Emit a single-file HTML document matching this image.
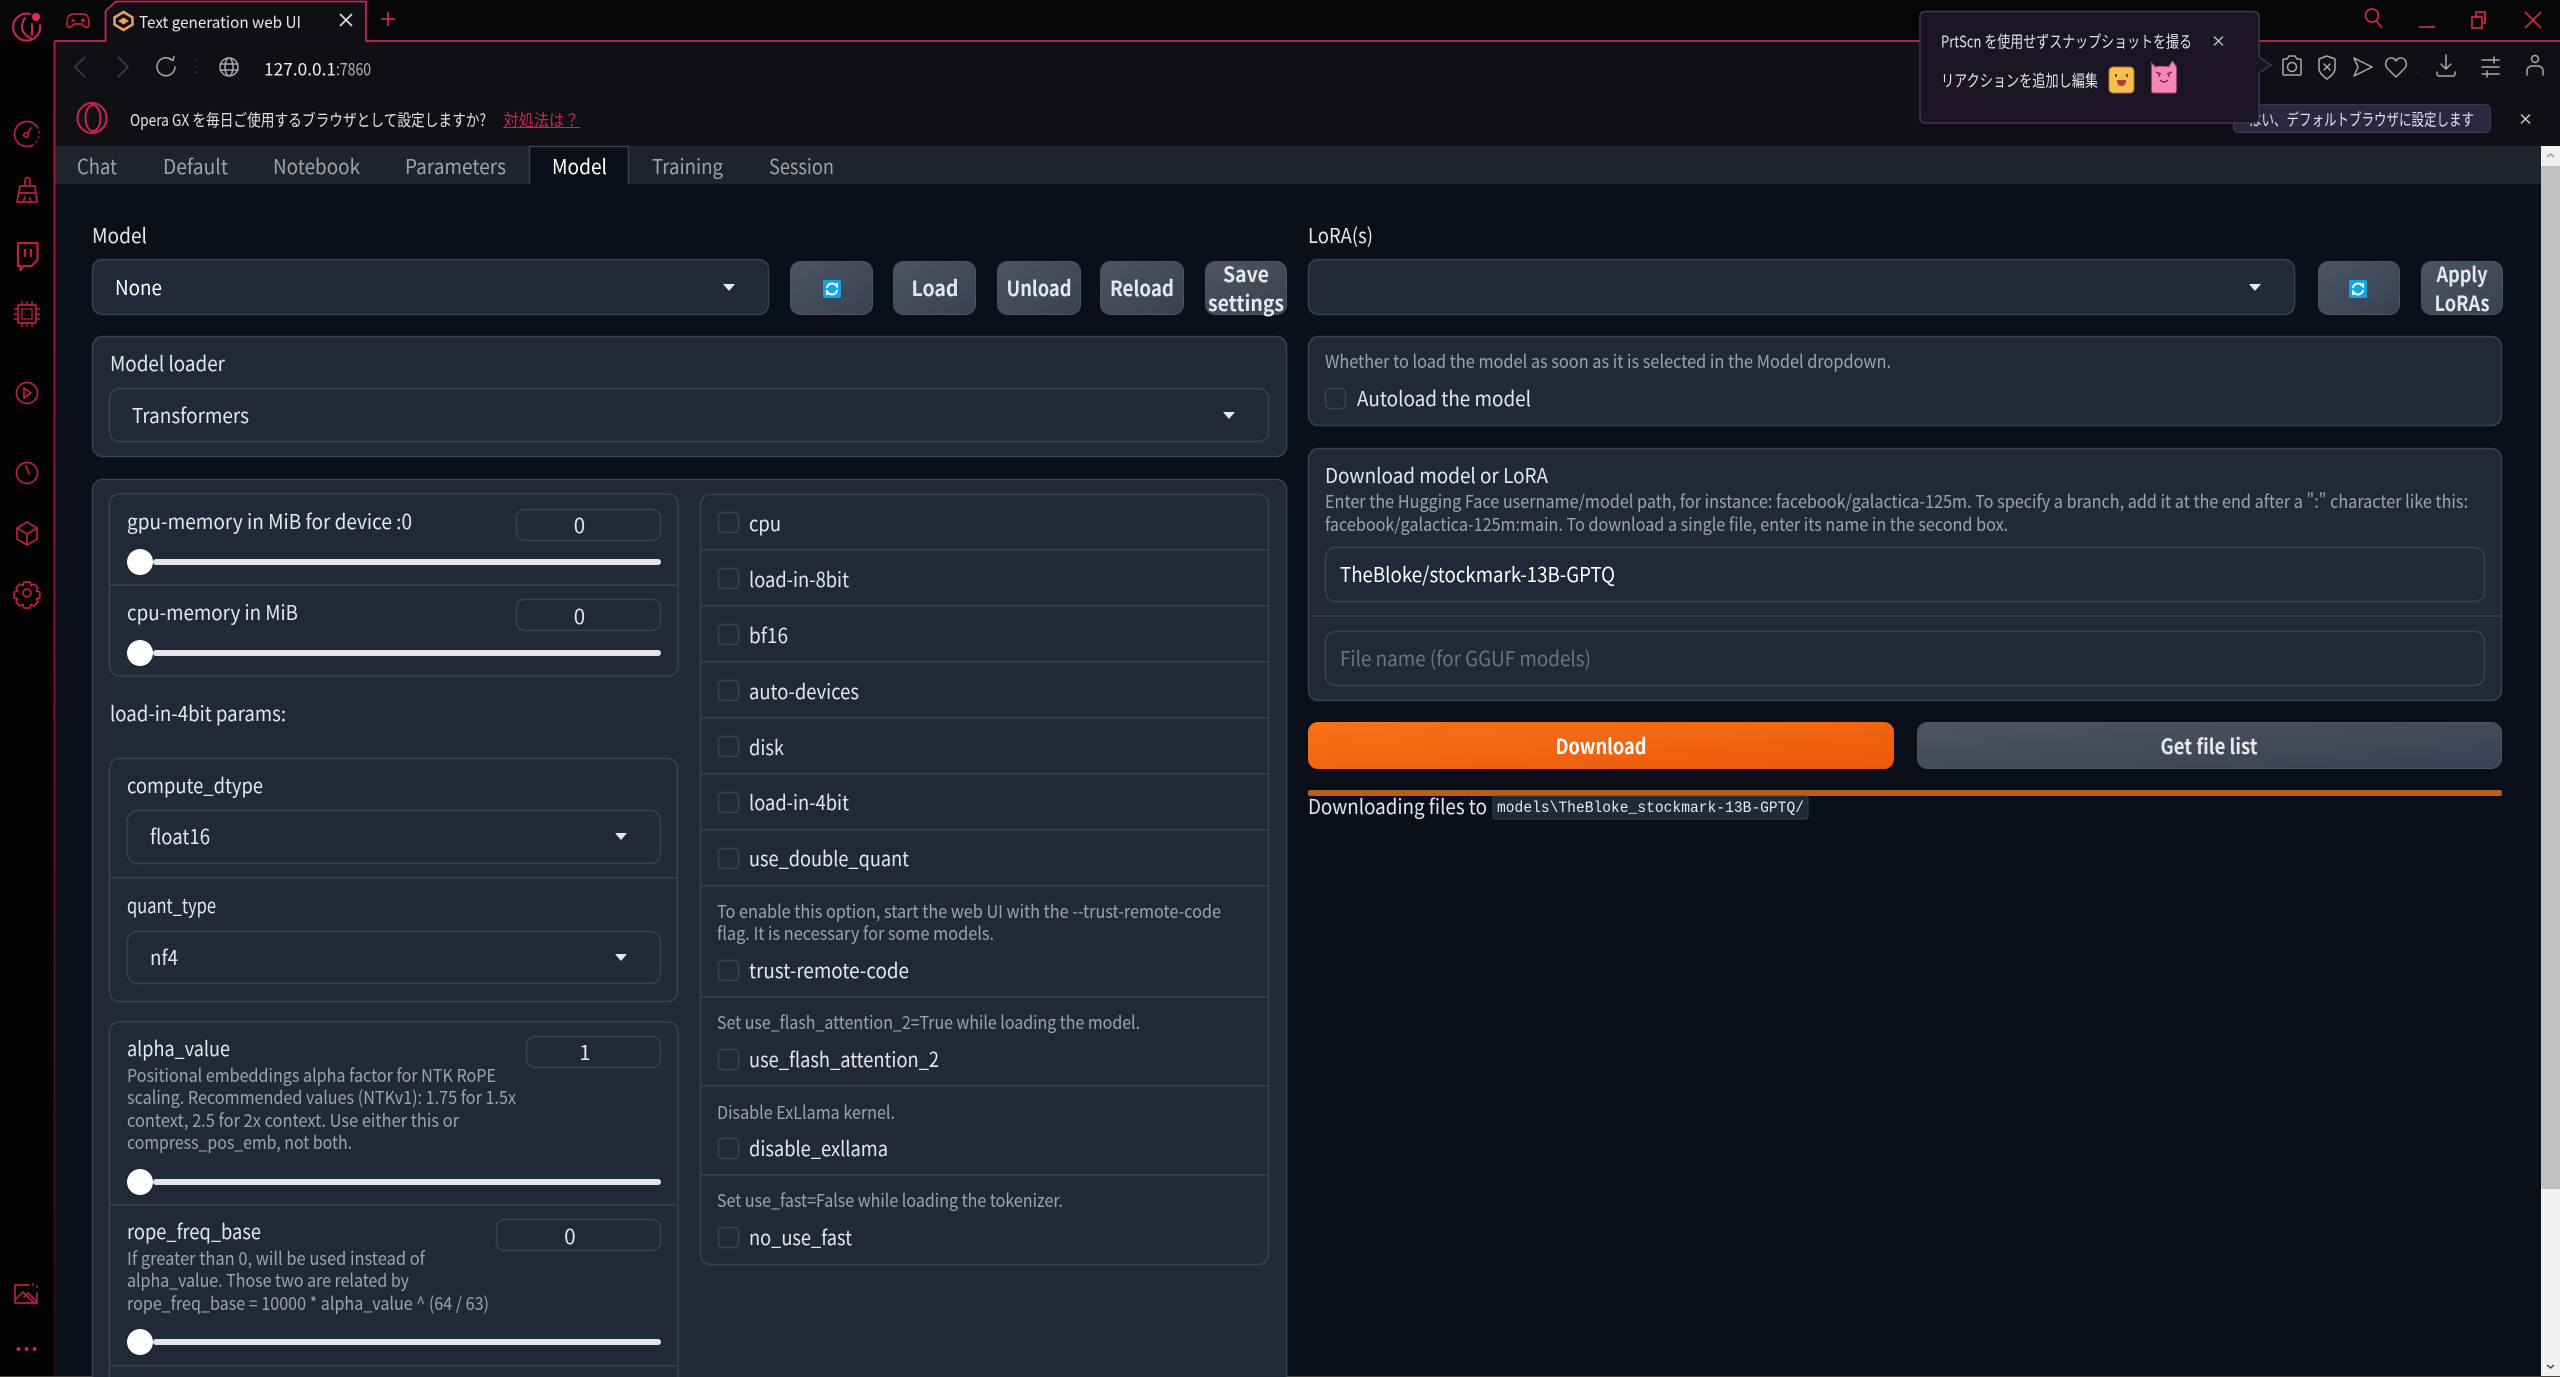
<!DOCTYPE html>
<html lang="ja"><head><meta charset="utf-8"><title>Text generation web UI</title>
<style>
html,body{margin:0;padding:0;width:2560px;height:1377px;overflow:hidden;background:#0b0f19}
svg{display:block}
text{font-family:"Noto Sans CJK JP","Liberation Sans",sans-serif;font-size:20.5px;fill:#e5e7eb;dominant-baseline:central;transform:translateY(-1px)}
.i{font-size:18px;fill:#9ca3af}
.b{font-weight:700;fill:#e5e7eb;font-size:21px}
.w{fill:#fff}
.t{fill:#9ca3af}
.s{font-size:16.500px;fill:#e4e2e8;transform:translateY(0)}
.p{fill:#1f2937;stroke:#374151;stroke-width:1.5}
.f{fill:#1f2937;stroke:#374151;stroke-width:1.5}
.l{stroke:#374151;stroke-width:1.5}
.btn{fill:url(#g);stroke:#4b5563;stroke-width:1}
.r{fill:none;stroke:#b8213f;stroke-width:1.7;stroke-linecap:round;stroke-linejoin:round}
.g{fill:none;stroke:#a9a8af;stroke-width:1.5;stroke-linecap:round;stroke-linejoin:round}
.c{fill:#1f2937;stroke:#374151;stroke-width:1.5}
</style></head><body>
<svg xmlns="http://www.w3.org/2000/svg" width="2560" height="1377" viewBox="0 0 2560 1377">
<defs>
<linearGradient id="g" x1="0" y1="0" x2="1" y2="1"><stop offset="0" stop-color="#4b5563"/><stop offset="1" stop-color="#374151"/></linearGradient>
<linearGradient id="o" x1="0" y1="0" x2="1" y2="1"><stop offset="0" stop-color="#f97316"/><stop offset="1" stop-color="#ea580c"/></linearGradient>
<linearGradient id="vl" gradientUnits="userSpaceOnUse" x1="0" y1="41" x2="0" y2="1377"><stop offset="0" stop-color="#b5203f"/><stop offset=".4" stop-color="#8a1c34"/><stop offset="1" stop-color="#2a0a14"/></linearGradient>
<g id="rf"><rect x="-9" y="-9" width="18" height="18" rx="1.5" fill="#0ea5e9"/><path d="M-5 -1a5 5 0 0 1 8.500-3l1.500 1.500v-3.500M5 1a5 5 0 0 1-8.500 3l-1.500-1.500v3.500" fill="none" stroke="#fff" stroke-width="1.900"/></g>
<path id="ar" d="M-6 -3h12l-6 7z" fill="#e5e7eb"/>
<rect id="th" x="-13" y="-13" width="26" height="26" rx="13" fill="#fff"/>
</defs>

<!-- chrome background -->
<rect width="2560" height="1377" fill="#020204"/>
<rect x="0" y="0" width="2560" height="41" fill="#060609"/>
<rect x="0" y="41" width="54" height="1336" fill="#030305"/>
<rect x="55" y="41" width="2505" height="105" fill="#100f16"/>
<path d="M105.500 41V11L116 1H366V41z" fill="#100f16"/>
<path d="M54.500 41H105.500V11L116 1.500H366V41H2560" fill="none" stroke="#c8264a" stroke-width="1.800"/>
<line x1="54.500" y1="41" x2="54.500" y2="1377" stroke="url(#vl)" stroke-width="1.800"/>

<!-- page -->
<rect x="55.500" y="146" width="2486" height="1231" fill="#0b0f19"/>
<rect x="55.500" y="146" width="2486" height="38" fill="#1f242c"/>
<path d="M529.500 184V146.500H628.500V184" fill="#0b0f19" stroke="#374151" stroke-width="1.500"/>
<text x="77" y="166" textLength="40" lengthAdjust="spacingAndGlyphs" class="t">Chat</text>
<text x="163" y="166" textLength="65" lengthAdjust="spacingAndGlyphs" class="t">Default</text>
<text x="273" y="166" textLength="87" lengthAdjust="spacingAndGlyphs" class="t">Notebook</text>
<text x="405" y="166" textLength="101" lengthAdjust="spacingAndGlyphs" class="t">Parameters</text>
<text x="552" y="166" textLength="55" lengthAdjust="spacingAndGlyphs" class="w">Model</text>
<text x="652" y="166" textLength="71" lengthAdjust="spacingAndGlyphs" class="t">Training</text>
<text x="769" y="166" textLength="65" lengthAdjust="spacingAndGlyphs" class="t">Session</text>

<!-- scrollbar -->
<rect x="2541" y="146" width="19" height="1231" fill="#f1f1f1"/>
<rect x="2541" y="166" width="19" height="1023" fill="#c1c1c1"/>
<path d="M2547 157l3.500-3 3.500 3" fill="none" stroke="#a0a0a0" stroke-width="1.500"/>
<path d="M2547 1365l3.500 3 3.500-3" fill="none" stroke="#505050" stroke-width="1.500"/>
<rect x="0" y="1376" width="2560" height="1" fill="#4a473c"/>

<!-- top row -->
<text x="92" y="235" textLength="55" lengthAdjust="spacingAndGlyphs">Model</text>
<rect class="p" x="92.500" y="259.500" width="676" height="55" rx="10"/>
<text x="115" y="287" textLength="47" lengthAdjust="spacingAndGlyphs" class="w">None</text>
<use href="#ar" x="729" y="287"/>
<rect class="btn" x="790.500" y="261.500" width="82" height="53" rx="10"/><use href="#rf" x="832" y="289"/>
<rect class="btn" x="893.500" y="261.500" width="82" height="53" rx="10"/><text class="b" x="935" y="289" text-anchor="middle" textLength="47" lengthAdjust="spacingAndGlyphs">Load</text>
<rect class="btn" x="997.500" y="261.500" width="83" height="53" rx="10"/><text class="b" x="1039" y="289" text-anchor="middle" textLength="65" lengthAdjust="spacingAndGlyphs">Unload</text>
<rect class="btn" x="1100.500" y="261.500" width="83" height="53" rx="10"/><text class="b" x="1142" y="289" text-anchor="middle" textLength="64" lengthAdjust="spacingAndGlyphs">Reload</text>
<rect class="btn" x="1205.500" y="261.500" width="81" height="53" rx="10"/><text class="b" x="1246" y="275" text-anchor="middle" textLength="46" lengthAdjust="spacingAndGlyphs">Save</text><text class="b" x="1246" y="304" text-anchor="middle" textLength="76" lengthAdjust="spacingAndGlyphs">settings</text>

<text x="1308" y="235" textLength="65" lengthAdjust="spacingAndGlyphs">LoRA(s)</text>
<rect class="p" x="1308.500" y="259.500" width="986" height="55" rx="10"/>
<use href="#ar" x="2255" y="287"/>
<rect class="btn" x="2318.500" y="261.500" width="81" height="53" rx="10"/><use href="#rf" x="2358" y="289"/>
<rect class="btn" x="2421.500" y="261.500" width="81" height="53" rx="10"/><text class="b" x="2462" y="275" text-anchor="middle" textLength="51" lengthAdjust="spacingAndGlyphs">Apply</text><text class="b" x="2462" y="304" text-anchor="middle" textLength="55" lengthAdjust="spacingAndGlyphs">LoRAs</text>

<!-- model loader -->
<rect class="p" x="92.500" y="336.500" width="1194" height="120" rx="10"/>
<text x="110" y="363" textLength="115" lengthAdjust="spacingAndGlyphs">Model loader</text>
<rect class="f" x="109.500" y="388.500" width="1159" height="53" rx="10"/>
<text x="132" y="415" textLength="117" lengthAdjust="spacingAndGlyphs">Transformers</text>
<use href="#ar" x="1229" y="415"/>

<!-- big panel -->
<rect class="p" x="92.500" y="479.500" width="1194" height="920" rx="10"/>

<!-- left col: sliders -->
<path class="p" d="M109.500 504a10 10 0 0 1 10-10H668a10 10 0 0 1 10 10V666a10 10 0 0 1-10 10H119.500a10 10 0 0 1-10-10z"/>
<line class="l" x1="110" y1="585" x2="678" y2="585"/>
<text x="127" y="521" textLength="285" lengthAdjust="spacingAndGlyphs">gpu-memory in MiB for device :0</text>
<rect class="f" x="516.500" y="509.500" width="144" height="31" rx="8"/>
<text x="579.500" y="525" text-anchor="middle">0</text>
<rect x="153" y="559" width="508" height="6" rx="3" fill="#e5e7eb"/><use href="#th" x="140" y="562"/>
<text x="127" y="612" textLength="171" lengthAdjust="spacingAndGlyphs">cpu-memory in MiB</text>
<rect class="f" x="516.500" y="599.500" width="144" height="31" rx="8"/>
<text x="579.500" y="616" text-anchor="middle">0</text>
<rect x="153" y="650" width="508" height="6" rx="3" fill="#e5e7eb"/><use href="#th" x="140" y="653"/>

<text x="110" y="713" textLength="176" lengthAdjust="spacingAndGlyphs">load-in-4bit params:</text>

<rect class="p" x="109.500" y="758.500" width="568" height="243" rx="10"/>
<line class="l" x1="110" y1="878" x2="678" y2="878"/>
<text x="127" y="785" textLength="136" lengthAdjust="spacingAndGlyphs">compute_dtype</text>
<rect class="f" x="127.500" y="810.500" width="533" height="53" rx="10"/>
<text x="150" y="836" textLength="60" lengthAdjust="spacingAndGlyphs">float16</text>
<use href="#ar" x="621" y="836"/>
<text x="127" y="905" textLength="89" lengthAdjust="spacingAndGlyphs">quant_type</text>
<rect class="f" x="127.500" y="931.500" width="533" height="52" rx="10"/>
<text x="150" y="957" textLength="28" lengthAdjust="spacingAndGlyphs">nf4</text>
<use href="#ar" x="621" y="957"/>

<path class="p" d="M109.500 1032a10 10 0 0 1 10-10H668a10 10 0 0 1 10 10V1400H109.500z"/>
<line class="l" x1="110" y1="1205" x2="678" y2="1205"/>
<line class="l" x1="110" y1="1366" x2="678" y2="1366"/>
<text x="127" y="1048" textLength="103" lengthAdjust="spacingAndGlyphs">alpha_value</text>
<rect class="f" x="526.500" y="1036.500" width="134" height="31" rx="8"/>
<text x="585" y="1052" text-anchor="middle">1</text>
<text class="i" x="127" y="1076" textLength="369" lengthAdjust="spacingAndGlyphs">Positional embeddings alpha factor for NTK RoPE</text>
<text class="i" x="127" y="1098" textLength="389" lengthAdjust="spacingAndGlyphs">scaling. Recommended values (NTKv1): 1.75 for 1.5x</text>
<text class="i" x="127" y="1121" textLength="332" lengthAdjust="spacingAndGlyphs">context, 2.5 for 2x context. Use either this or</text>
<text class="i" x="127" y="1143" textLength="225" lengthAdjust="spacingAndGlyphs">compress_pos_emb, not both.</text>
<rect x="153" y="1179" width="508" height="6" rx="3" fill="#e5e7eb"/><use href="#th" x="140" y="1182"/>
<text x="127" y="1231" textLength="134" lengthAdjust="spacingAndGlyphs">rope_freq_base</text>
<rect class="f" x="496.500" y="1219.500" width="164" height="31" rx="8"/>
<text x="570" y="1236" text-anchor="middle">0</text>
<text class="i" x="127" y="1259" textLength="298" lengthAdjust="spacingAndGlyphs">If greater than 0, will be used instead of</text>
<text class="i" x="127" y="1281" textLength="282" lengthAdjust="spacingAndGlyphs">alpha_value. Those two are related by</text>
<text class="i" x="127" y="1304" textLength="362" lengthAdjust="spacingAndGlyphs">rope_freq_base = 10000 * alpha_value ^ (64 / 63)</text>
<rect x="153" y="1339" width="508" height="6" rx="3" fill="#e5e7eb"/><use href="#th" x="140" y="1342"/>

<!-- checkbox col -->
<rect class="p" x="700.500" y="494.500" width="568" height="770" rx="10"/>
<g class="l">
<line x1="701" y1="550" x2="1269" y2="550"/><line x1="701" y1="606" x2="1269" y2="606"/><line x1="701" y1="662" x2="1269" y2="662"/><line x1="701" y1="718" x2="1269" y2="718"/><line x1="701" y1="774" x2="1269" y2="774"/><line x1="701" y1="830" x2="1269" y2="830"/><line x1="701" y1="886" x2="1269" y2="886"/><line x1="701" y1="997" x2="1269" y2="997"/><line x1="701" y1="1086" x2="1269" y2="1086"/><line x1="701" y1="1175" x2="1269" y2="1175"/>
</g>
<rect class="c" x="718.500" y="512.500" width="20" height="20" rx="4"/><text x="749" y="523" textLength="32" lengthAdjust="spacingAndGlyphs">cpu</text>
<rect class="c" x="718.500" y="568.500" width="20" height="20" rx="4"/><text x="749" y="579" textLength="100" lengthAdjust="spacingAndGlyphs">load-in-8bit</text>
<rect class="c" x="718.500" y="624.500" width="20" height="20" rx="4"/><text x="749" y="635" textLength="39" lengthAdjust="spacingAndGlyphs">bf16</text>
<rect class="c" x="718.500" y="680.500" width="20" height="20" rx="4"/><text x="749" y="691" textLength="110" lengthAdjust="spacingAndGlyphs">auto-devices</text>
<rect class="c" x="718.500" y="736.500" width="20" height="20" rx="4"/><text x="749" y="747" textLength="35" lengthAdjust="spacingAndGlyphs">disk</text>
<rect class="c" x="718.500" y="792.500" width="20" height="20" rx="4"/><text x="749" y="802" textLength="100" lengthAdjust="spacingAndGlyphs">load-in-4bit</text>
<rect class="c" x="718.500" y="848.500" width="20" height="20" rx="4"/><text x="749" y="858" textLength="160" lengthAdjust="spacingAndGlyphs">use_double_quant</text>
<text class="i" x="717" y="912" textLength="504" lengthAdjust="spacingAndGlyphs">To enable this option, start the web UI with the --trust-remote-code</text>
<text class="i" x="717" y="934" textLength="277" lengthAdjust="spacingAndGlyphs">flag. It is necessary for some models.</text>
<rect class="c" x="718.500" y="960.500" width="20" height="20" rx="4"/><text x="749" y="970" textLength="160" lengthAdjust="spacingAndGlyphs">trust-remote-code</text>
<text class="i" x="717" y="1023" textLength="423" lengthAdjust="spacingAndGlyphs">Set use_flash_attention_2=True while loading the model.</text>
<rect class="c" x="718.500" y="1049.500" width="20" height="20" rx="4"/><text x="749" y="1059" textLength="190" lengthAdjust="spacingAndGlyphs">use_flash_attention_2</text>
<text class="i" x="717" y="1113" textLength="178" lengthAdjust="spacingAndGlyphs">Disable ExLlama kernel.</text>
<rect class="c" x="718.500" y="1138.500" width="20" height="20" rx="4"/><text x="749" y="1148" textLength="139" lengthAdjust="spacingAndGlyphs">disable_exllama</text>
<text class="i" x="717" y="1201" textLength="346" lengthAdjust="spacingAndGlyphs">Set use_fast=False while loading the tokenizer.</text>
<rect class="c" x="718.500" y="1227.500" width="20" height="20" rx="4"/><text x="749" y="1237" textLength="103" lengthAdjust="spacingAndGlyphs">no_use_fast</text>

<!-- right panels -->
<rect class="p" x="1308.500" y="336.500" width="1193" height="89" rx="10"/>
<text class="i" x="1325" y="362" textLength="566" lengthAdjust="spacingAndGlyphs">Whether to load the model as soon as it is selected in the Model dropdown.</text>
<rect class="c" x="1325.500" y="388.500" width="20" height="20" rx="4"/>
<text x="1357" y="398" textLength="174" lengthAdjust="spacingAndGlyphs">Autoload the model</text>

<rect class="p" x="1308.500" y="448.500" width="1193" height="252" rx="10"/>
<text x="1325" y="475" textLength="223" lengthAdjust="spacingAndGlyphs">Download model or LoRA</text>
<text class="i" x="1325" y="502" textLength="1143" lengthAdjust="spacingAndGlyphs">Enter the Hugging Face username/model path, for instance: facebook/galactica-125m. To specify a branch, add it at the end after a &quot;:&quot; character like this:</text>
<text class="i" x="1325" y="525" textLength="683" lengthAdjust="spacingAndGlyphs">facebook/galactica-125m:main. To download a single file, enter its name in the second box.</text>
<rect class="f" x="1325.500" y="547.500" width="1159" height="54" rx="10"/>
<text x="1340" y="574" textLength="275" lengthAdjust="spacingAndGlyphs" class="w">TheBloke/stockmark-13B-GPTQ</text>
<line class="l" x1="1309" y1="616" x2="2501" y2="616"/>
<rect class="f" x="1325.500" y="631.500" width="1159" height="54" rx="10"/>
<text x="1340" y="658" textLength="251" lengthAdjust="spacingAndGlyphs" style="fill:#6b7280">File name (for GGUF models)</text>

<rect x="1308" y="722" width="586" height="47" rx="10" fill="url(#o)"/>
<text class="b" style="fill:#fff" x="1601" y="747" text-anchor="middle" textLength="91" lengthAdjust="spacingAndGlyphs">Download</text>
<rect class="btn" x="1917.500" y="722.500" width="584" height="46" rx="10"/>
<text class="b" x="2209" y="747" text-anchor="middle" textLength="97" lengthAdjust="spacingAndGlyphs">Get file list</text>

<rect x="1308" y="790" width="1194" height="6" rx="2" fill="#b45f1f"/>
<text x="1308" y="806" textLength="179" lengthAdjust="spacingAndGlyphs">Downloading files to</text>
<rect x="1493" y="796" width="315" height="23" rx="2" fill="#1f2937" stroke="#374151"/>
<text x="1497" y="809" textLength="307" lengthAdjust="spacingAndGlyphs" style="font-family:'Liberation Mono',monospace;font-size:15.500px">models\TheBloke_stockmark-13B-GPTQ/</text>

<!-- logo -->
<g fill="none" stroke="#c8264a" stroke-width="2.100" stroke-linecap="round">
<path d="M30 14a13.500 13.500 0 1 0 10 11"/><path d="M25 18a9 13 0 0 0-3 10c1 5 5 9 9 10M32 24v11"/>
</g>
<circle cx="36" cy="17" r="4" fill="#ef2a52"/>
<g class="r">
<!-- game -->
<path d="M74 14h8c6 0 7 4 7 10 0 4-3 4-5 2l-2-2h-8l-2 2c-2 2-5 2-5-2 0-6 1-10 7-10z"/><path d="M73 19v3M71.500 20.500h3" stroke-width="1.300"/><circle cx="83" cy="20.500" r="1.200"/>
<!-- speedo -->
<path d="M33 145A12.500 12.500 0 1 1 38 128"/><path d="M39 132v.5M38.500 137v.5M36.500 141.500v.5"/><circle cx="26" cy="135" r="2.300"/><path d="M28 133l3-5"/>
<!-- broom -->
<path d="M25 185v-5a2.500 2.500 0 0 1 5 0v5M20 186h15l2 16H17zM19 193h17M23 202l2-5M31 202l-1-4"/>
<!-- twitch -->
<path d="M18 243h19.500v17l-6 6h-8l-3 4v-4h-2.500z" stroke-width="2.200"/><path d="M25 250v6M31 250v6" stroke-width="2.400"/>
<!-- cpu -->
<rect x="18" y="305" width="18" height="18" rx="1"/><rect x="22" y="309" width="10" height="10" stroke-width="1.300"/><path d="M22 305v-3.500M27 305v-3.500M32 305v-3.500M22 323v3.500M27 323v3.500M32 323v3.500M18 309h-3.500M18 314h-3.500M18 319h-3.500M36 309h3.500M36 314h3.500M36 319h3.500" stroke-width="1.400"/>
<!-- play -->
<circle cx="27" cy="393" r="10.500"/><path d="M24 388l7 5-7 5z"/>
<!-- clock -->
<circle cx="27" cy="473" r="10.500"/><path d="M26 466l3 8"/>
<!-- cube -->
<path d="M27 522l10 6v11l-10 6-10-6v-11zM17 528l10 6 10-6M27 534v11"/>
<!-- gear -->
<circle cx="27" cy="593" r="4"/><path d="M24 582h6l1 3.500 3-1.500 4 4-1.700 3 3.500 1v6l-3.500 1 1.700 3-4 4-3-1.500-1 3.500h-6l-1-3.500-3 1.500-4-4 1.700-3-3.500-1v-6l3.500-1-1.700-3 4-4 3 1.500z"/>
<!-- gallery -->
<path d="M29 1285H15v18h22v-10M33 1284v1M37 1286v1M15 1300l8-8 11 11M24 1297l4-4 9 9"/>
</g>
<circle cx="18.500" cy="1349" r="1.900" fill="#d62550"/><circle cx="26.500" cy="1349" r="1.900" fill="#d62550"/><circle cx="34.500" cy="1349" r="1.900" fill="#d62550"/>

<!-- tab -->
<path d="M123.500 12l9 5.500v7l-9 5.500-9-5.500v-7z" fill="none" stroke="#e8a35a" stroke-width="2.500"/><path d="M118 21l5.500-3.500 5.500 3.500-5.500 3.500z" fill="#e8a35a"/>
<text x="139" y="22" textLength="162" lengthAdjust="spacingAndGlyphs" style="font-size:16px;fill:#e8e6ea">Text generation web UI</text>
<path d="M340 14l12 12M352 14l-12 12" fill="none" stroke="#d8d6dc" stroke-width="1.800"/>
<path d="M388 12v14M381 19h14" fill="none" stroke="#c8264a" stroke-width="1.800"/>

<!-- toolbar left -->
<path d="M85 57l-10 10 10 10" fill="none" stroke="#3b3a42" stroke-width="1.800"/>
<path d="M118 57l10 10-10 10" fill="none" stroke="#3b3a42" stroke-width="1.800"/>
<path class="g" d="M172 60a9 9 0 1 0 3 7M169.500 59l3.500 1.500 1-4"/>
<path d="M196 60v1M196 66v1M196 72v1" stroke="#3b3a42" stroke-width="2.200"/>
<g class="g"><circle cx="229" cy="67" r="9"/><ellipse cx="229" cy="67" rx="4" ry="9"/><path d="M220 64h18M220 70h18"/></g>
<text x="264" y="69" textLength="72" lengthAdjust="spacingAndGlyphs" style="font-size:17px;fill:#f0eff2">127.0.0.1</text>
<text x="336" y="69" textLength="35" lengthAdjust="spacingAndGlyphs" style="font-size:17px;fill:#b4b3ba">:7860</text>

<!-- info bar -->
<g fill="none" stroke="#c8264a" stroke-width="2"><ellipse cx="92" cy="118" rx="14.500" ry="15"/><ellipse cx="93" cy="118" rx="7.500" ry="13"/></g>
<text class="s" x="130" y="119" textLength="356" lengthAdjust="spacingAndGlyphs">Opera GX を毎日ご使用するブラウザとして設定しますか?</text>
<text class="s" x="503.500" y="119" textLength="76" lengthAdjust="spacingAndGlyphs" style="fill:#c8264a">対処法は？</text>
<line x1="503" y1="127.500" x2="580" y2="127.500" stroke="#c8264a" stroke-width="1"/>
<rect x="2233.500" y="104.500" width="257" height="28" rx="5" fill="#2d2640" stroke="#3f3856"/>
<text class="s" x="2249" y="118.500" textLength="225" lengthAdjust="spacingAndGlyphs">はい、デフォルトブラウザに設定します</text>
<path d="M2521 114.500l9 9M2530 114.500l-9 9" fill="none" stroke="#c9c8cf" stroke-width="1.500"/>

<!-- toolbar right icons -->
<g class="g">
<path d="M2284 59h3l2-3h6l2 3h3a1 1 0 0 1 1 1v14a1 1 0 0 1-1 1h-16a1 1 0 0 1-1-1V60a1 1 0 0 1 1-1z"/><circle cx="2292" cy="67" r="4.500"/>
<path d="M2327 56l8 3v9c0 5-4 8-8 11-4-3-8-6-8-11v-9z"/><path d="M2324 64l6 6M2330 64l-6 6"/>
<path d="M2354 58l18 9-18 9 4-9z"/>
<path d="M2396 77l-8-8c-5-5-1-12 4-11 2 0 3 1 4 3 1-2 2-3 4-3 5-1 9 6 4 11z"/>
<path d="M2446 55v14M2441 64l5 5 5-5M2437 72v2a2 2 0 0 0 2 2h14a2 2 0 0 0 2-2v-2"/>
<path d="M2482 60h17M2482 67h17M2482 74h17M2494 57v6M2487 71v6"/>
<circle cx="2535" cy="59" r="3.500"/><path d="M2527 75v-4a5 5 0 0 1 5-5h6a5 5 0 0 1 5 5v4"/>
</g>
<path d="M2418 60v1M2418 66v1M2418 72v1" stroke="#2e2d34" stroke-width="2.200"/>

<!-- window controls -->
<g fill="none" stroke="#c8264a" stroke-width="1.800"><circle cx="2372" cy="15.500" r="6.500"/><path d="M2376.500 21l5.500 7"/><path d="M2419 27h16"/><rect x="2472" y="17" width="10" height="11"/><path d="M2476 17v-5h9v11h-3"/><path d="M2525 12l16 16M2541 12l-16 16"/></g>

<!-- popup -->
<path d="M1925 11.500H2254a5 5 0 0 1 5 5V57l12 8-12 8v45a5 5 0 0 1-5 5H1925a5 5 0 0 1-5-5V16.500a5 5 0 0 1 5-5z" fill="#1a1424" stroke="#3d3650" stroke-width="1.500"/>
<text class="s" x="1941" y="40.500" textLength="251" lengthAdjust="spacingAndGlyphs">PrtScn を使用せずスナップショットを撮る</text>
<path d="M2214 36.500l9 9M2223 36.500l-9 9" fill="none" stroke="#b9b8bf" stroke-width="1.500"/>
<text class="s" x="1941" y="79.500" textLength="157" lengthAdjust="spacingAndGlyphs">リアクションを追加し編集</text>
<rect x="2109" y="67" width="25" height="26" rx="4" fill="#f8bf4e" stroke="#a87a30"/>
<path d="M2116 74v3M2127 74v3" stroke="#4a3020" stroke-width="1.600"/>
<path d="M2117 80h9c0 5-2 6-4.500 6s-4.500-1-4.500-6z" fill="#b0403a"/>
<path d="M2151.500 63l4 4c3-1 10-1 13 0l4-6 4 6v24a2 2 0 0 1-2 2h-21a2 2 0 0 1-2-2z" fill="#f986b2" stroke="#9a4a70" stroke-width="1"/>
<path d="M2156 72l5 2M2172 72l-5 2M2159 74v3M2169 74v3M2160 80q4 4 8 0" fill="none" stroke="#4a2040" stroke-width="1.200"/>
</svg>
</body></html>
